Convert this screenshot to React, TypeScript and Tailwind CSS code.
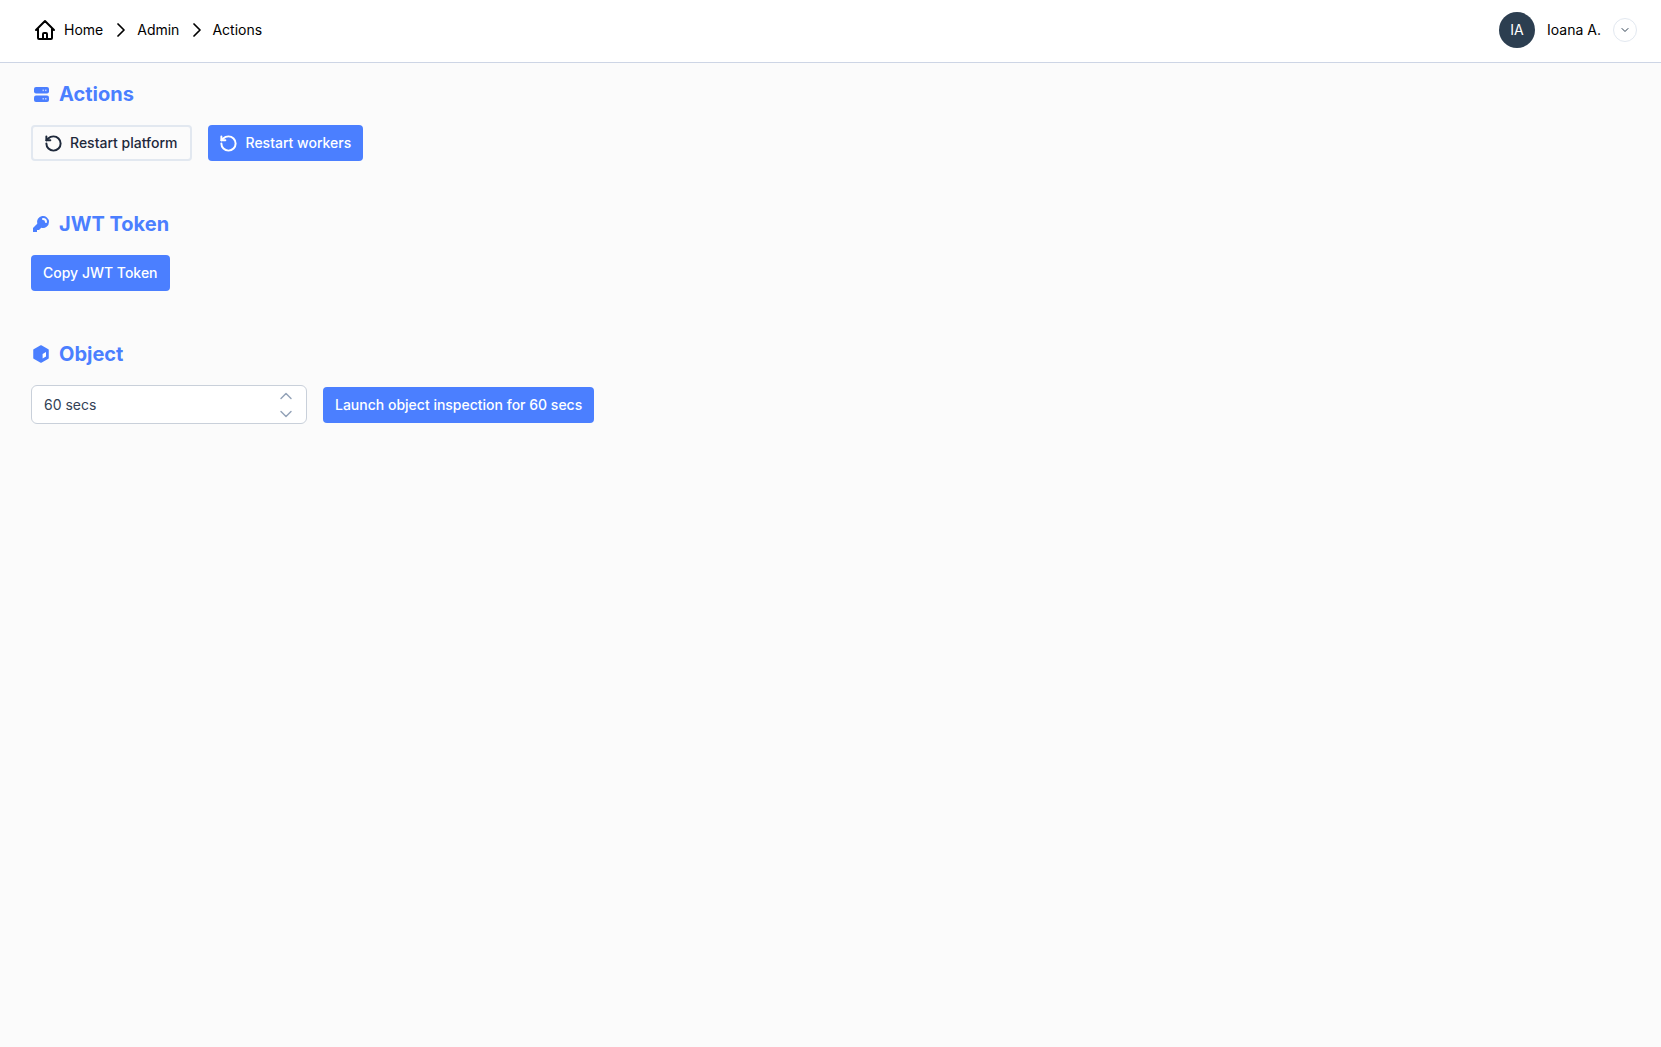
import { ChevronDown, ChevronRight, ChevronUp, RotateCcw } from 'lucide-react';
import { HiKey, HiOutlineHome } from 'react-icons/hi';

function ServerIcon() {
  return (
    <svg width="15" height="15" viewBox="0 0 15 15" fill="none">
      <rect x="0" y="0" width="15" height="6.6" rx="2" fill="#4b7fff" />
      <rect x="0" y="8.4" width="15" height="6.6" rx="2" fill="#4b7fff" />
      <rect x="8.5" y="2.6" width="1.5" height="1.5" fill="#b9cdff" />
      <rect x="11" y="2.6" width="1.5" height="1.5" fill="#b9cdff" />
      <rect x="8.5" y="11" width="1.5" height="1.5" fill="#b9cdff" />
      <rect x="11" y="11" width="1.5" height="1.5" fill="#b9cdff" />
    </svg>
  );
}

function CubeIcon() {
  return (
    <svg className="-mt-[1px]" width="16" height="18" viewBox="0 0 16 18" fill="none">
      <path
        d="M8 1 L15 5 V13 L8 17 L1 13 V5 Z"
        fill="#4b7fff"
        stroke="#4b7fff"
        strokeWidth="1.5"
        strokeLinejoin="round"
      />
      <path d="M9.6 9 L13 7 V11.4 L9.6 13.4 Z" fill="#ffffff" />
    </svg>
  );
}

function SectionTitle({ icon, title }: { icon: React.ReactNode; title: string }) {
  return (
    <div className="flex items-center gap-2 h-[28px] text-[#4b7fff]">
      <span className="w-5 flex justify-center">{icon}</span>
      <h2 className="text-xl font-bold leading-7">{title}</h2>
    </div>
  );
}

const primaryBtn =
  'h-9 flex items-center rounded bg-[#4b7fff] text-sm font-medium text-white';

export default function App() {
  return (
    <div className="min-h-screen bg-[#fbfbfb] font-['Inter',sans-serif]">
      <header className="h-[63px] flex items-center justify-between bg-white border-b border-[#cdd5e5] pl-[33px] pr-6 pb-[2px]">
        <nav className="flex items-center text-sm text-black">
          <HiOutlineHome className="w-6 h-6" />
          <span className="ml-[7px]">Home</span>
          <ChevronRight className="w-6 h-6 ml-[6px] mr-[4px]" strokeWidth={1.75} />
          <span>Admin</span>
          <ChevronRight className="w-6 h-6 ml-[6px] mr-[3px]" strokeWidth={1.75} />
          <span>Actions</span>
        </nav>
        <div className="flex items-center">
          <div className="w-9 h-9 rounded-full bg-[#2c3e50] flex items-center justify-center text-sm text-white">
            IA
          </div>
          <span className="ml-3 text-sm text-black">Ioana A.</span>
          <button className="ml-3 w-6 h-6 rounded-full border border-[#e2e8f0] flex items-center justify-center">
            <ChevronDown className="w-3 h-3 text-[#2c3e50]" />
          </button>
        </div>
      </header>

      <main className="pl-[31px] pt-[17px]">
        <section>
          <SectionTitle icon={<ServerIcon />} title="Actions" />
          <div className="flex items-center gap-4 mt-[17px]">
            <button className="h-9 flex items-center gap-[7px] rounded border-2 border-[#e2e8f0] pl-[11px] pr-3 text-sm font-medium text-[#1e293b]">
              <RotateCcw className="w-[19px] h-[19px]" strokeWidth={2.5} />
              Restart platform
            </button>
            <button className={primaryBtn + ' gap-2 pl-[11px] pr-3'}>
              <RotateCcw className="w-[19px] h-[19px]" strokeWidth={2.5} />
              Restart workers
            </button>
          </div>
        </section>

        <section className="mt-[49px]">
          <SectionTitle icon={<HiKey className="w-5 h-5" />} title="JWT Token" />
          <div className="flex mt-[17px]">
            <button className={primaryBtn + ' px-3'}>Copy JWT Token</button>
          </div>
        </section>

        <section className="mt-[49px]">
          <SectionTitle icon={<CubeIcon />} title="Object" />
          <div className="flex items-center gap-4 mt-[17px]">
            <div className="w-[276px] h-[39px] flex items-center justify-between rounded-md border border-[#c9d0da] bg-white pl-3 pr-[10px] text-sm text-[#334155]">
              <span>60 secs</span>
              <span className="flex flex-col -space-y-[2px] text-[#94a3b8]">
                <ChevronUp className="w-5 h-5" strokeWidth={1.75} />
                <ChevronDown className="w-5 h-5" strokeWidth={1.75} />
              </span>
            </div>
            <button className={primaryBtn + ' px-3'}>Launch object inspection for 60 secs</button>
          </div>
        </section>
      </main>
    </div>
  );
}
